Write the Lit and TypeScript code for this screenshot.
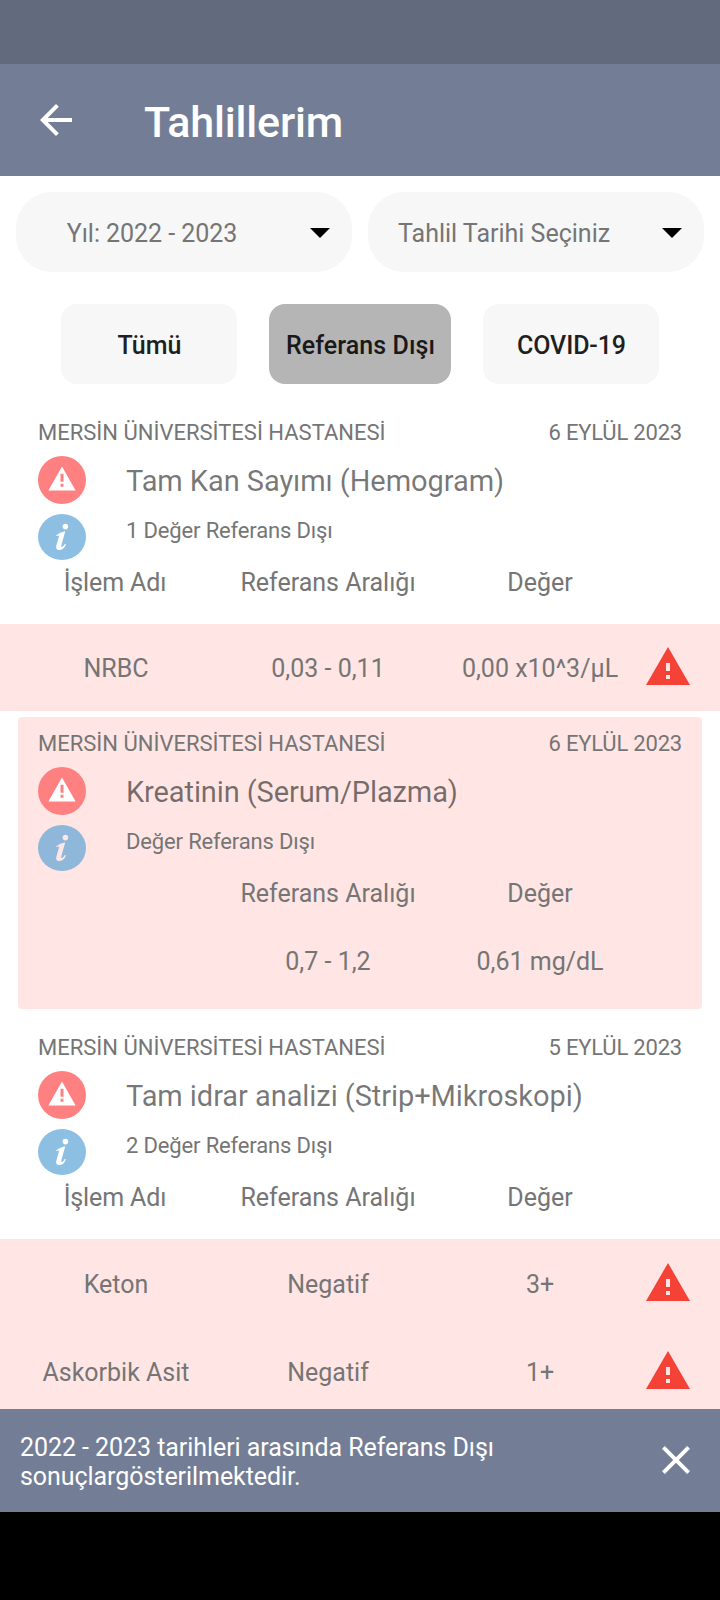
import { LitElement, html, css, svg, nothing } from "lit";
import { classMap } from "lit/directives/class-map.js";

interface Row { name: string; range: string; value: string }
interface Report { hospital: string; date: string; title: string; note: string; rows: Row[]; single?: boolean }

const reports: Report[] = [
  { hospital: "MERSİN ÜNİVERSİTESİ HASTANESİ", date: "6 EYLÜL 2023", title: "Tam Kan Sayımı (Hemogram)", note: "1 Değer Referans Dışı",
    rows: [{ name: "NRBC", range: "0,03 - 0,11", value: "0,00 x10^3/µL" }] },
  { hospital: "MERSİN ÜNİVERSİTESİ HASTANESİ", date: "6 EYLÜL 2023", title: "Kreatinin (Serum/Plazma)", note: "Değer Referans Dışı", single: true,
    rows: [{ name: "", range: "0,7 - 1,2", value: "0,61 mg/dL" }] },
  { hospital: "MERSİN ÜNİVERSİTESİ HASTANESİ", date: "5 EYLÜL 2023", title: "Tam idrar analizi (Strip+Mikroskopi)", note: "2 Değer Referans Dışı",
    rows: [{ name: "Keton", range: "Negatif", value: "3+" }, { name: "Askorbik Asit", range: "Negatif", value: "1+" }] },
];

const warning = svg`<path d="M1 21h22L12 2 1 21zm12-3h-2v-2h2v2zm0-4h-2v-4h2v4z"></path>`;
const caret = html`<svg class="caret" viewBox="0 0 20 10"><path d="M0 0h20L10 10z"></path></svg>`;

class AppRoot extends LitElement {
  static styles = css`
    :host { display: flex; flex-direction: column; width: 720px; height: 1600px; overflow: hidden; background: #fff; color: #757575; font: 400 25px/29px Roboto, sans-serif; }
    * { box-sizing: border-box; }
    svg { display: block; flex: none; }
    .status { height: 64px; flex: none; background: #626a7e; }
    .bar { height: 112px; flex: none; display: flex; align-items: center; padding-left: 32px; background: #737d96; color: #fff; }
    .icon { width: 48px; height: 48px; fill: currentColor; }
    .bar h1 { margin: 4px 0 0 64px; font-size: 43px; line-height: 50px; font-weight: 500; letter-spacing: -0.18px; }
    .filters { display: flex; gap: 16px; padding: 16px; flex: none; }
    .select { flex: 1; height: 80px; border-radius: 36px; background: #f7f7f7; display: flex; align-items: center; padding: 3px 22px 0 30px; }
    .select span { flex: 1; }
    .select.year span { text-align: center; padding-right: 52px; letter-spacing: -0.05px; }
    .caret { width: 20px; height: 10px; fill: #000; margin-top: -1px; }
    .tabs { display: flex; justify-content: center; gap: 32px; padding-top: 16px; height: 118px; flex: none; }
    .tab { width: 176px; height: 80px; border-radius: 16px; background: #f7f7f7; color: #1f1f1f; font-weight: 500; display: flex; align-items: center; justify-content: center; padding: 2px 0 0 1px; }
    .tab:last-child { letter-spacing: -0.1px; }
    .tab.on { width: 182px; background: #b5b5b5; color: #191919; letter-spacing: 0.08px; }
    .list { flex: 1; min-height: 0; overflow: hidden; }
    .report { margin-bottom: 6px; --info: #8dbfe3; --mark: #fff; }
    .report.single { height: 292px; margin: 0 18px 12px; border-radius: 4px; background: #ffe6e4; --info: #8eb7d9; --mark: #fce6e8; }
    .head { height: 154px; padding: 14px 38px 0; }
    .single .head { padding-left: 20px; padding-right: 20px; }
    .meta { display: flex; justify-content: space-between; height: 36px; font-size: 22px; line-height: 26px; }
    .meta .date { letter-spacing: -0.2px; }
    .body { display: flex; gap: 40px; }
    .badges { display: flex; flex-direction: column; gap: 10px; }
    .alert { width: 48px; height: 48px; }
    .info { width: 48px; height: 46px; }
    .title { margin-top: 8px; font-size: 29px; line-height: 34px; color: rgba(0, 0, 0, 0.54); white-space: nowrap; letter-spacing: -0.06px; }
    .single .title { letter-spacing: -0.1px; }
    .note { margin-top: 20px; font-size: 22px; line-height: 26px; letter-spacing: -0.15px; }
    .cols { display: grid; grid-template-columns: 212px 212px 212px 64px; padding-left: 10px; align-items: center; text-align: center; }
    .single .cols { margin-left: -18px; }
    .labels { height: 64px; align-items: start; padding-top: 8px; }
    .labels span:first-child { letter-spacing: -0.12px; padding-right: 2px; }
    .row { height: 88px; background: #ffe6e4; padding-top: 3px; }
    .row .icon { color: #f44336; margin: -3px 0 0 -2px; }
    .row.only { height: 87px; padding-top: 1px; }
    .row.only .icon { margin-top: -2px; }
    .single .row { height: 60px; padding-top: 0; background: none; }
    .single .row span { margin-top: -8px; }
    .snack { flex: none; height: 103px; display: flex; align-items: center; justify-content: space-between; padding: 2px 20px 0; background: #737d96; color: #fff; letter-spacing: -0.06px; }
    .snack .icon { margin-top: -3px; }
    .nav { flex: none; height: 88px; background: #000; }
  `;

  private report(r: Report) {
    return html`<section class=${classMap({ report: true, single: !!r.single })}>
      <div class="head">
        <div class="meta"><span>${r.hospital}</span><span class="date">${r.date}</span></div>
        <div class="body">
          <div class="badges">
            <svg class="alert" viewBox="0 0 48 48"><circle cx="24" cy="24" r="24" fill="#ff8080"></circle><path fill="#fff" fill-rule="evenodd" d="M24 10.4 37.6 34.4H10.4ZM22.5 17.8V25.8H25.5V17.8ZM22.5 27.8V30.8H25.5V27.8Z"></path></svg>
            <svg class="info" viewBox="0 0 48 46"><ellipse cx="24" cy="23" rx="24" ry="23" fill="var(--info)"></ellipse><circle cx="27.4" cy="12.6" r="2.8" fill="var(--mark)"></circle><path fill="var(--mark)" d="M18.2 21.2 Q22 18.4 27.3 17.2 L23.4 31 Q22.8 33.6 24.2 32.9 Q26 31.8 27 29.8 L28 30.4 Q25.6 36 21 36 Q17.3 35.8 18.4 31.5 L21 22.4 Q21.2 20.9 18.2 21.9Z"></path></svg>
          </div>
          <div><div class="title">${r.title}</div><div class="note">${r.note}</div></div>
        </div>
      </div>
      <div class="cols labels"><span>${r.single ? "" : "İşlem Adı"}</span><span>Referans Aralığı</span><span>Değer</span></div>
      ${r.rows.map((x) => html`<div class=${classMap({ cols: true, row: true, only: r.rows.length === 1 })}>
        <span>${x.name}</span><span>${x.range}</span><span>${x.value}</span>
        ${r.single ? nothing : html`<svg class="icon" viewBox="0 0 24 24">${warning}</svg>`}
      </div>`)}
    </section>`;
  }

  render() {
    return html`
      <div class="status"></div>
      <header class="bar">
        <svg class="icon" viewBox="0 0 24 24"><path d="M20 11H7.83l5.59-5.59L12 4l-8 8 8 8 1.41-1.41L7.83 13H20v-2z"></path></svg>
        <h1>Tahlillerim</h1>
      </header>
      <div class="filters">
        <div class="select year"><span>Yıl: 2022 - 2023</span>${caret}</div>
        <div class="select"><span>Tahlil Tarihi Seçiniz</span>${caret}</div>
      </div>
      <div class="tabs"><div class="tab">Tümü</div><div class="tab on">Referans Dışı</div><div class="tab">COVID-19</div></div>
      <main class="list">${reports.map((r) => this.report(r))}</main>
      <footer class="snack">
        <div>2022 - 2023 tarihleri arasında Referans Dışı<br />sonuçlargösterilmektedir.</div>
        <svg class="icon" viewBox="0 0 24 24"><path d="M19 6.41L17.59 5 12 10.59 6.41 5 5 6.41 10.59 12 5 17.59 6.41 19 12 13.41 17.59 19 19 17.59 13.41 12z"></path></svg>
      </footer>
      <div class="nav"></div>`;
  }
}
customElements.define("app-root", AppRoot);
